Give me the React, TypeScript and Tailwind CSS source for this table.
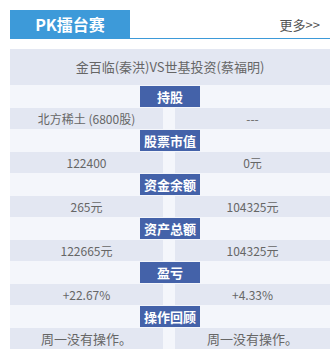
import React from "react";

const font = { fontFamily: '"Microsoft YaHei", "Noto Sans CJK SC", "Noto Sans", sans-serif' };

type Row = { label: string; left: string; right: string; big?: boolean };

const rows: Row[] = [
  { label: "持股", left: "北方稀土 (6800股)", right: "---" },
  { label: "股票市值", left: "122400", right: "0元" },
  { label: "资金余额", left: "265元", right: "104325元" },
  { label: "资产总额", left: "122665元", right: "104325元" },
  { label: "盈亏", left: "+22.67%", right: "+4.33%" },
  { label: "操作回顾", left: "周一没有操作。", right: "周一没有操作。", big: true },
];

export default function App() {
  return (
    <div className="w-[333px] h-[354px] bg-white pt-[10px] pl-[10px]" style={font}>
      <div className="w-[320px]">
        <div className="flex items-end justify-between border-b border-[#3d9ad9]">
          <div className="w-[120px] h-[28px] bg-[#3d9ad9] flex items-center justify-center text-white text-[16px] font-bold leading-none">
            PK擂台赛
          </div>
          <div className="h-[28px] flex items-center pr-[10px] text-[13px] text-[#555] leading-none">
            更多&gt;&gt;
          </div>
        </div>
        <div className="mt-[10px] bg-[#f4f6fb]">
          <div className="h-[36px] bg-[#e3e7f2] flex items-center justify-center text-[13px] text-[#666]">
            金百临(秦洪)VS世基投资(蔡福明)
          </div>
          {rows.map((r) => (
            <React.Fragment key={r.label}>
              <div className="h-[22px] pt-px flex justify-center">
                <div className="w-[60px] h-[21px] bg-[#4462a9] text-white text-[13px] font-bold flex items-center justify-center leading-none">
                  {r.label}
                </div>
              </div>
              <div className="h-[22px] pt-px flex">
                <div
                  className={
                    r.big
                      ? "w-[153px] h-[21px] bg-[#e3e7f2] flex items-center justify-center text-[13px] text-[#666] leading-none"
                      : "w-[153px] h-[21px] bg-[#e3e7f2] flex items-center justify-center text-[12px] text-[#666] leading-none"
                  }
                >
                  {r.left}
                </div>
                <div className="w-[12px]" />
                <div
                  className={
                    r.big
                      ? "flex-1 h-[21px] bg-[#e3e7f2] flex items-center justify-center text-[13px] text-[#666] leading-none"
                      : "flex-1 h-[21px] bg-[#e3e7f2] flex items-center justify-center text-[12px] text-[#666] leading-none"
                  }
                >
                  {r.right}
                </div>
              </div>
            </React.Fragment>
          ))}
        </div>
      </div>
    </div>
  );
}
